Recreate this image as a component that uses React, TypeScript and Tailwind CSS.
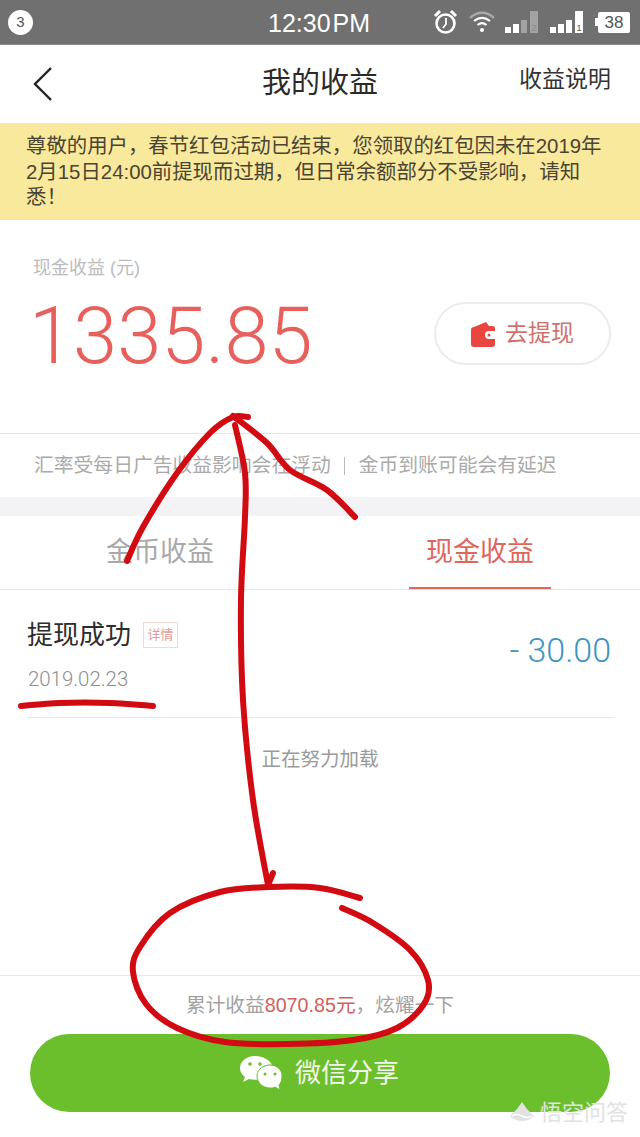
const cjk = "font-['Liberation_Sans','Noto_Sans_CJK_SC',sans-serif]";
const num = "font-['Roboto','Noto_Sans_CJK_SC',sans-serif]";

// smooth line through hand-picked points
const smooth = (pts: number[][]) => {
  let d = `M${pts[0][0]} ${pts[0][1]}`;
  for (let i = 0; i < pts.length - 1; i++) {
    const p0 = pts[i - 1] || pts[i];
    const p1 = pts[i];
    const p2 = pts[i + 1];
    const p3 = pts[i + 2] || p2;
    const c1x = p1[0] + (p2[0] - p0[0]) / 6;
    const c1y = p1[1] + (p2[1] - p0[1]) / 6;
    const c2x = p2[0] - (p3[0] - p1[0]) / 6;
    const c2y = p2[1] - (p3[1] - p1[1]) / 6;
    d += `C${c1x} ${c1y} ${c2x} ${c2y} ${p2[0]} ${p2[1]}`;
  }
  return d;
};

const strokes = [
  // left wing of the arrow
  [[127, 561], [143, 527], [177, 473], [210, 433], [233, 417], [248, 417]],
  // right wing
  [[233, 416], [267, 443], [290, 470], [327, 490], [355, 517]],
  // shaft
  [[235, 425], [245, 473], [245, 517], [241, 600], [243, 700], [253, 800], [268, 885]],
  // head at the circle
  [[268, 885], [273, 873]],
  // circle
  [
    [360, 898], [320, 888], [270, 887], [220, 892], [170, 913], [140, 947], [133, 972],
    [146, 1004], [177, 1028], [225, 1042], [287, 1044], [353, 1040], [397, 1028],
    [424, 1004], [428, 980], [410, 950], [373, 923], [342, 908],
  ],
  // under the date
  [[21, 706], [60, 703], [110, 703], [153, 706]],
];

const SimBars = ({ dim, label }: { dim?: boolean; label: string }) => (
  <svg width="34" height="24" viewBox="0 0 34 24" fill="white">
    <rect x="0" y="17" width="6" height="6" />
    <rect x="8" y="14" width="6" height="9" />
    <rect x="16" y="10" width="6" height="13" opacity={dim ? 0.35 : 1} />
    <rect x="25" y="1" width="8" height="22" opacity={dim ? 0.35 : 1} />
    <text x="26.5" y="21" fontSize="9" fill={dim ? "#8c8c8c" : "#555"} fontFamily="Liberation Sans">
      {label}
    </text>
  </svg>
);

const StatusBar = () => (
  <div className="h-[45px] bg-[#707070] flex items-center pl-[8px] pr-[10px] relative text-white shrink-0 border-b border-[#8a8a8a]">
    <div className="w-[25px] h-[25px] rounded-full bg-white text-[#555] text-[15px] flex items-center justify-center">
      3
    </div>
    <div className="absolute left-[268px] top-[8px] text-[25px] leading-[30px]">
      12:30<span className="ml-[2px]">PM</span>
    </div>
    <div className="ml-auto flex items-center">
      {/* alarm */}
      <svg className="mr-[11px]" width="25" height="26" viewBox="0 0 25 26" fill="none" stroke="white">
        <circle cx="12.5" cy="14.5" r="9" strokeWidth="2.6" />
        <path d="M13 9v6l-3 4" strokeWidth="1.8" />
        <path d="M2 7l5-5M23 7l-5-5" strokeWidth="3" />
      </svg>
      {/* wifi */}
      <svg className="mr-[10px]" width="26" height="24" viewBox="0 0 26 24" fill="none" stroke="white">
        <path d="M1 8c7-7 17-7 24 0" strokeWidth="2.4" opacity="0.4" />
        <path d="M5 11c5-4 11-4 16 0" strokeWidth="2.2" />
        <path d="M8.5 15c3-2.4 6-2.4 9 0" strokeWidth="2.2" />
        <circle cx="13" cy="20" r="2" fill="white" stroke="none" />
      </svg>
      <div className="mr-[11px] flex">
        <SimBars dim label="2" />
      </div>
      <div className="mr-[11px] flex">
        <SimBars label="1" />
      </div>
      <div className="flex items-center">
        <div className="w-[3px] h-[8px] bg-white" />
        <div className="w-[32px] h-[21px] rounded-[2px] bg-white text-[#555] text-[17px] leading-[21px] text-center">
          38
        </div>
      </div>
    </div>
  </div>
);

const Annotations = () => (
  <svg
    className="absolute left-0 top-0 pointer-events-none"
    width="640"
    height="1137"
    viewBox="0 0 640 1137"
    fill="none"
    stroke="#d20b12"
    strokeLinecap="round"
    strokeLinejoin="round"
    strokeWidth="6"
  >
    {strokes.map((s, i) => (
      <path key={i} d={smooth(s)} />
    ))}
  </svg>
);

export default function App() {
  return (
    <div className={`relative w-[640px] h-[1137px] overflow-hidden bg-white flex flex-col ${cjk}`}>
      <StatusBar />

      {/* nav */}
      <div className="h-[78px] shrink-0 flex items-center justify-between relative pl-[33px] pr-[29px]">
        <svg width="19" height="34" viewBox="0 0 19 34" fill="none" stroke="#222" strokeWidth="2.4">
          <path d="M18 1L2 17l16 16" />
        </svg>
        <div className="absolute left-0 right-0 text-center text-[29px] text-[#2a2a2a] pointer-events-none">
          我的收益
        </div>
        <div className="text-[23px] text-[#333] -mt-[10px]">收益说明</div>
      </div>

      {/* notice */}
      <div className="h-[97px] shrink-0 bg-[#f9e99d] pl-[26px] pt-[11px] text-[20.4px] leading-[25.5px] text-[#4a4433] whitespace-nowrap">
        尊敬的用户，春节红包活动已结束，您领取的红包因未在2019年
        <br />
        2月15日24:00前提现而过期，但日常余额部分不受影响，请知
        <br />
        悉！
      </div>

      {/* balance */}
      <div className="h-[214px] shrink-0 px-[33px] pt-[36px] border-b border-[#e8e8e8]">
        <div className="text-[18px] leading-[24px] text-[#bcbcbc]">现金收益 (元)</div>
        <div className="mt-[13px] flex items-start justify-between -mr-[4px]">
          <div className={`${num} font-light text-[79.5px] leading-[80px] text-[#e8605c] -ml-[4px] mt-[3px]`}>1335.85</div>
          <div className="w-[177px] h-[63px] mt-[9px] rounded-full border-2 border-[#ececec] flex items-center justify-center gap-[10px] text-[23px] text-[#d0706f]">
            <svg width="24" height="26" viewBox="0 0 24 26" fill="#e9463f">
              <path d="M0 9c0-2 1-3 3-3l12-5 3 4h3c2 0 3 1 3 2v3h-6a4 4 0 0 0 0 8h6v5c0 2-1 3-3 3H3c-2 0-3-1-3-3z" />
              <circle cx="18" cy="14" r="1.5" />
            </svg>
            去提现
          </div>
        </div>
      </div>
      <div className="h-[63px] shrink-0 pl-[34px] flex items-center text-[19.8px] text-[#aaaaaa] whitespace-nowrap">
        汇率受每日广告收益影响会在浮动
        <span className="w-[1px] h-[18px] bg-[#bbbbbb] ml-[13px] mr-[14px]" />
        金币到账可能会有延迟
      </div>
      <div className="h-[19px] shrink-0 bg-[#f3f3f5]" />

      {/* tabs */}
      <div className="h-[74px] shrink-0 flex border-b border-[#e8e8e8] text-[27px]">
        <div className="flex-1 flex items-center justify-center text-[#a9a9a9]">金币收益</div>
        <div className="flex-1 flex items-center justify-center text-[#e0665c] relative">
          现金收益
          <div className="absolute left-[89px] right-[89px] bottom-0 h-[2px] bg-[#e0665c]" />
        </div>
      </div>

      {/* record */}
      <div className="ml-[27px] mr-[26px] h-[128px] shrink-0 border-b border-[#e8e8e8] flex items-center justify-between">
        <div>
          <div className="flex items-center gap-[12px]">
            <div className="text-[26px] leading-[36px] text-[#2c2c2c]">提现成功</div>
            <div className="w-[35px] h-[26px] border border-[#f3d9d6] text-[13px] leading-[24px] text-center text-[#df9a95]">
              详情
            </div>
          </div>
          <div className={`${num} mt-[14px] text-[20.4px] font-light leading-[24px] text-[#8f8f8f] pl-[1px]`}>2019.02.23</div>
        </div>
        <div className={`${num} font-light text-[34px] text-[#3f94c2] mr-[3px] -mt-[6px]`}>- 30.00</div>
      </div>
      <div className="h-[84px] shrink-0 flex items-center justify-center text-[19.5px] text-[#9a9a9a]">
        正在努力加载
      </div>

      <div className="flex-1" />

      {/* footer */}
      <div className="h-[162px] shrink-0 border-t border-[#e8e8e8] flex flex-col items-center">
        <div className="h-[58px] pt-[2px] flex items-center text-[19.7px] text-[#a2a2a2]">
          累计收益<span className="text-[#d3615c]">8070.85元</span>，炫耀一下
        </div>
        <div className="w-[580px] h-[78px] rounded-full bg-[#6bbf2c] flex items-center justify-center gap-[12px] text-[26px] text-[#f1f8e8] pr-[2px]">
          <svg width="44" height="36" viewBox="0 0 44 36" fill="white">
            <path d="M16 1C7 1 1 7 1 13c0 4 2 7 5 9l-2 5 6-3c2 .6 4 .8 6 .8 1 0 2 0 3-.2A12 12 0 0 1 33 10C31 5 24 1 16 1z" />
            <path d="M43 21c0-7-6-11-12-11S18 14 18 21s6 12 13 12c2 0 3 0 5-1l5 3-1-5c2-2 3-5 3-9z" stroke="#6bbf2c" strokeWidth="1" />
            <circle cx="11" cy="9" r="1.8" fill="#6bbf2c" />
            <circle cx="21" cy="9" r="1.8" fill="#6bbf2c" />
            <circle cx="26" cy="19" r="1.5" fill="#6bbf2c" />
            <circle cx="36" cy="19" r="1.5" fill="#6bbf2c" />
          </svg>
          微信分享
        </div>
      </div>

      {/* watermark */}
      <div className="absolute left-[509px] top-[1098px] flex items-center gap-[5px] text-[22px] leading-[30px] text-[#e2e2e2]">
        <svg width="26" height="24" viewBox="0 0 26 24" fill="#e2e2e2">
          <path d="M13 1l5 7 7 7c-3 3-7 5-12 5S4 18 1 15l7-7z" />
          <path d="M3 15c3-2 6-2 10 0s7 2 10 0" fill="none" stroke="white" strokeWidth="1.5" />
        </svg>
        悟空问答
      </div>

      <Annotations />
    </div>
  );
}
